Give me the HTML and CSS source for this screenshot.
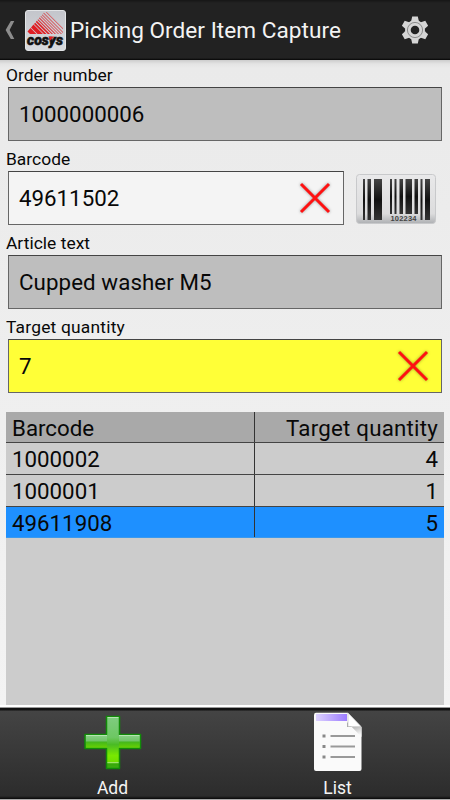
FILE: index.html
```html
<!DOCTYPE html>
<html lang="en">
<head>
<meta charset="utf-8">
<title>Picking Order Item Capture</title>
<link rel="stylesheet" href="styles.css">
</head>
<body>
<header class="bar">
  <svg class="back" width="10" height="20" viewBox="0 0 10 20"><path d="M5.800 1H9.300L4.600 10 9.300 19H5.800L.6 10z" fill="#8c8c8c"/></svg>
  <svg class="logo" width="41" height="41" viewBox="0 0 41 41">
    <defs><linearGradient id="tile" x2="0" y2="1"><stop stop-color="#c3c5cb"/><stop offset="1" stop-color="#d8dadd"/></linearGradient></defs>
    <rect x=".5" y=".5" width="40" height="40" rx="2.5" fill="url(#tile)" stroke="#e2e4e6"/>
    <g fill="#df1d23">
      <path d="M2.500 21.500L5.500 18 11.500 24H5zM6 17.500L8.500 14.500 18 24H12.500z"/>
      <path d="M9 14L10.200 12.700 21.500 24H19zM10.800 12L11.800 10.800 25 24H22.800z"/>
      <path d="M12.500 10L13.200 9.200 28 24H26.500zM14 8.300L14.600 7.600 31 24H29.700z" opacity=".9"/>
      <path d="M15.500 6.500L16 6 34 24H33zM16.900 4.900L17.400 4.400 37 24H36zM18.300 3.300L18.800 2.800 38 22V23z" opacity=".85"/>
      <path d="M21 2.300L21.600 1.900 38 18.300V19.300z" opacity=".8"/>
    </g>
    <text class="brand" x="2" y="34.500" textLength="36" lengthAdjust="spacingAndGlyphs">cos<tspan fill="#111">y</tspan>s</text>
    <path d="M23.500 26.500h5.500l-3.500 4z" fill="#e12025"/>
  </svg>
  <h1 class="title">Picking Order Item Capture</h1>
  <svg class="gear" width="28" height="28" viewBox="-14 -14 28 28">
    <g fill="#d5d5d5">
      <circle r="10"/>
      <path id="tooth" d="M-3.800-9L-2.800-13.500H2.800L3.800-9V9L2.800 13.500H-2.800L-3.800 9z"/>
      <use href="#tooth" transform="rotate(60)"/><use href="#tooth" transform="rotate(120)"/>
    </g>
    <circle r="7.600" fill="none" stroke="#8b8b8b" stroke-width="1"/>
    <circle r="4.300" fill="#222"/>
  </svg>
</header>
<main class="content">
  <form class="form">
    <div class="group"><div class="label">Order number</div><div class="field locked"><span>1000000006</span></div></div>
    <div class="group"><div class="label">Barcode</div>
      <div class="line">
        <div class="field entry"><span>49611502</span><svg class="clear" width="34" height="34" viewBox="0 0 34 34"><path d="M3 3L31 31M31 3L3 31" stroke="#f11" stroke-width="3"/></svg></div>
        <svg class="scan" width="80" height="50" viewBox="0 0 80 50">
          <defs><linearGradient id="key" x2="0" y2="1"><stop stop-color="#e9e9ea"/><stop offset=".8" stop-color="#dcdcdd"/><stop offset="1" stop-color="#aeb0b3"/></linearGradient>
          <linearGradient id="ink" x2="0" y2="1"><stop stop-color="#444"/><stop offset=".5" stop-color="#111"/><stop offset="1" stop-color="#333"/></linearGradient></defs>
          <rect x=".5" y=".5" width="79" height="49" rx="3" fill="url(#key)" stroke="#c8c9cb"/>
          <g fill="url(#ink)"><rect x="7" y="5" width="2" height="41"/><rect x="11.500" y="5" width="3.500" height="41"/><rect x="18" y="5" width="8" height="41"/><rect x="34" y="5" width="2" height="35"/><rect x="38.500" y="5" width="2" height="35"/><rect x="43.500" y="5" width="3.500" height="35"/><rect x="49.500" y="5" width="6.500" height="35"/><rect x="58.500" y="5" width="3.500" height="35"/><rect x="64.500" y="5" width="2" height="41"/><rect x="69" y="5" width="5" height="41"/></g>
          <text x="34.500" y="46.500" textLength="26" class="code">102234</text>
        </svg>
      </div>
    </div>
    <div class="group"><div class="label">Article text</div><div class="field locked"><span class="words">Cupped washer M5</span></div></div>
    <div class="group"><div class="label wide">Target quantity</div><div class="field target"><span>7</span><svg class="clear" width="34" height="34" viewBox="0 0 34 34"><path d="M3 3L31 31M31 3L3 31" stroke="#f11" stroke-width="3"/></svg></div></div>
  </form>
  <section class="table">
    <div class="row head"><div class="cell">Barcode</div><div class="cell num">Target quantity</div></div>
    <div class="row"><div class="cell">1000002</div><div class="cell num">4</div></div>
    <div class="row"><div class="cell">1000001</div><div class="cell num">1</div></div>
    <div class="row selected"><div class="cell">49611908</div><div class="cell num">5</div></div>
  </section>
</main>
<footer class="actions">
  <div class="action">
    <svg width="58" height="55" viewBox="0 0 58 55">
      <defs><linearGradient id="green" x2="0" y2="1"><stop stop-color="#80cc80"/><stop offset=".4" stop-color="#6dc763"/><stop offset=".54" stop-color="#4abb24"/><stop offset=".75" stop-color="#78e900"/><stop offset=".87" stop-color="#71e000"/><stop offset=".88" stop-color="#b3ef7a"/><stop offset=".91" stop-color="#36a908"/><stop offset="1" stop-color="#3dae14"/></linearGradient>
      <linearGradient id="arm" x2="0" y2="1"><stop stop-color="#89cf87"/><stop offset=".48" stop-color="#70c568"/><stop offset=".52" stop-color="#43b61d"/><stop offset="1" stop-color="#65d004"/></linearGradient></defs>
      <path d="M22.500 1.500H35.500V19.500H56.500V33.500H35.500V53.500H22.500V33.500H1V19.500H22.500z" fill="url(#green)" stroke="#118b08" stroke-width="1.500" stroke-linejoin="round"/>
      <path d="M2 20.500H23V32.500H2zM35 20.500H55.500V32.500H35z" fill="url(#arm)"/>
      <path d="M23.500 2.500H34.500M2 20.500H23M35 20.500H55.500" stroke="#b5e5b1"/>
    </svg>
    <span class="caption">Add</span>
  </div>
  <div class="action">
    <svg width="50" height="60" viewBox="0 0 50 60">
      <defs><linearGradient id="violet"><stop stop-color="#ddd2ff"/><stop offset="1" stop-color="#9d7dff"/></linearGradient>
      <linearGradient id="shade" gradientUnits="userSpaceOnUse" x1="40" y1="13" x2="44" y2="24"><stop stop-color="#aaa"/><stop offset="1" stop-color="#fafafa"/></linearGradient></defs>
      <path d="M3 .7H35L48.500 15V57Q48.500 59 46.500 59H3Q1 59 1 57V3Q1 .7 3 .7z" fill="#fafafa"/>
      <path d="M3 2H34V9H3z" fill="url(#violet)"/>
      <path d="M34 10V15H48.500V25z" fill="url(#shade)"/>
      <path d="M35 1V14.500H48z" fill="#fff" stroke="#bbb" stroke-width=".6"/>
      <path d="M17.500 24H42M17.500 34.500H42M17.500 45H42" stroke="#999" stroke-width="2"/>
      <path d="M9.500 24H12.500M9.500 34.500H12.500M9.500 45H12.500" stroke="#888" stroke-width="3"/>
    </svg>
    <span class="caption">List</span>
  </div>
</footer>
</body>
</html>
```
FILE: styles.css
```css
* { box-sizing: border-box; }
body {
  margin: 0;
  width: 450px;
  height: 800px;
  overflow: hidden;
  display: flex;
  flex-direction: column;
  background: #f1f1f1;
  color: #080808;
  font-family: Roboto, sans-serif;
}
svg { display: block; flex: none; }
.bar {
  height: 60px;
  padding: 0 21px 0 5px;
  display: flex;
  align-items: center;
  background: linear-gradient(#161616 0, #222 3px, #222 58px, #050505 60px);
}
.logo { margin-left: 10px; }
.brand {
  font: italic 900 14px Roboto, sans-serif;
  fill: #111;
  stroke: #111;
  stroke-width: .6px;
}
.title {
  margin: 1px auto 0 4px;
  color: #f3f3f3;
  font-size: 22.6px;
  font-weight: 400;
  letter-spacing: .03px;
  white-space: nowrap;
}
.content {
  flex: 1;
  display: flex;
  flex-direction: column;
  padding: 5px 6px 0;
  background: linear-gradient(#ccc 0, #e4e4e4 4px, #eaeaea 8px, #f3f3f3 100%);
}
.form { margin: 0; }
.group { height: 84.15px; }
.label {
  height: 22px;
  line-height: 20px;
  font-size: 17.4px;
  letter-spacing: .03px;
  white-space: nowrap;
}
.wide { letter-spacing: .2px; }
.field {
  display: flex;
  align-items: center;
  justify-content: space-between;
  height: 54px;
  margin: 0 2px;
  padding: 0 11px 0 10px;
  border: 1px solid #666;
  border-top-color: #444;
  font-size: 22.3px;
  white-space: nowrap;
}
.words { letter-spacing: .08px; }
.locked { background: #bebebe; }
.target { background: #ffff37; }
.entry { width: 336px; margin-right: 0; background: #f4f4f4; }
.clear { filter: drop-shadow(0 0 1.5px rgba(0, 0, 0, .4)); }
.line { display: flex; }
.scan { margin: 3px 0 0 12px; }
.code { font: 700 7.5px "Liberation Sans", sans-serif; fill: #444; }
.table {
  flex: 1;
  margin-top: 10.4px;
  background: #ccc;
  font-size: 22.3px;
}
.row {
  display: grid;
  grid-template-columns: 249px 1fr;
  grid-template-rows: 100%;
  height: 32px;
  line-height: 32px;
  border-bottom: 1px solid #444;
}
.head { height: 31px; background: #a9a9a9; }
.head .num { letter-spacing: .22px; }
.cell { padding-left: 6px; border-right: 1px solid #333; }
.num { padding-right: 6px; border: 0; text-align: right; }
.selected { height: 31px; background: #1e90ff; border-bottom-color: #3a99ee; }
.actions {
  display: grid;
  grid-template-columns: 1fr 1fr;
  height: 95px;
  border-top: 2px solid #fff;
  border-bottom: 1px solid #aaa;
  background: linear-gradient(#999 0, #999 1px, #111 1px, #111 3px, #444 4px, #2c2c2c 89px, #080808 92px);
}
.action {
  display: flex;
  flex-direction: column;
  align-items: center;
  justify-content: space-between;
  padding-top: 5px;
}
.action:first-child svg { margin-top: 3px; }
.caption {
  color: #f5f5f5;
  font-size: 17.5px;
  line-height: 22px;
}
```
